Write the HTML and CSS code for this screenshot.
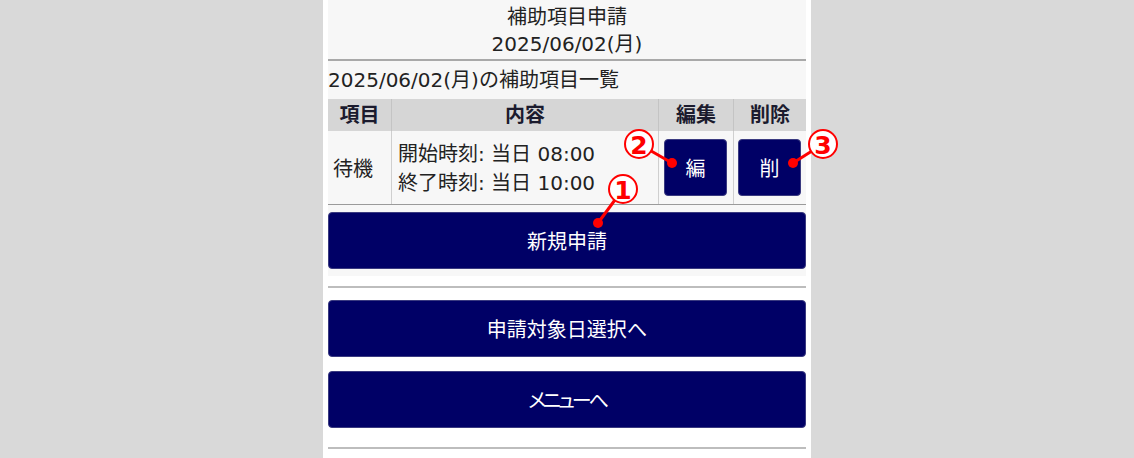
FILE: index.html
```html
<!DOCTYPE html>
<html lang="ja">
<head>
<meta charset="utf-8">
<title>補助項目申請</title>
<link rel="stylesheet" href="styles.css">
</head>
<body>
<div class="page">
  <div class="inner">
    <section class="top">
      <header class="head">
        <div>補助項目申請</div>
        <div>2025/06/02(月)</div>
      </header>
      <div class="subtitle">2025/06/02(月)の補助項目一覧</div>
      <table class="list">
        <thead>
          <tr>
            <th class="c-item">項目</th>
            <th class="c-body">内容</th>
            <th class="c-edit">編集</th>
            <th class="c-del">削除</th>
          </tr>
        </thead>
        <tbody>
          <tr>
            <td class="c-item">待機</td>
            <td class="c-body">開始時刻: 当日 08:00<br>終了時刻: 当日 10:00</td>
            <td class="c-edit"><button class="btn btn-sm">編</button></td>
            <td class="c-del"><button class="btn btn-sm">削</button></td>
          </tr>
        </tbody>
      </table>
      <button class="btn btn-wide btn-new">新規申請</button>
    </section>
    <hr class="rule rule-1">
    <button class="btn btn-wide btn-nav1">申請対象日選択へ</button>
    <button class="btn btn-wide btn-nav2">メニューへ</button>
    <hr class="rule rule-2">
  </div>
  <svg class="callouts" width="520" height="458" viewBox="0 0 520 458">
    <g class="lead">
      <line x1="300" y1="189" x2="275" y2="223"/>
      <line x1="316" y1="144" x2="349" y2="163"/>
      <line x1="500" y1="144" x2="470" y2="163"/>
    </g>
    <g class="dot">
      <circle cx="275" cy="223" r="5"/>
      <circle cx="349" cy="163" r="5"/>
      <circle cx="470" cy="163" r="5"/>
    </g>
    <g class="ring">
      <circle cx="300" cy="189" r="14"/>
      <circle cx="316" cy="144" r="14"/>
      <circle cx="500" cy="144" r="14"/>
    </g>
    <g class="num">
      <text x="300" y="190">1</text>
      <text x="316" y="145">2</text>
      <text x="500" y="145">3</text>
    </g>
  </svg>
</div>
</body>
</html>
```

FILE: styles.css
```css
html, body {
  margin: 0;
  padding: 0;
}

body {
  background: #d9d9d9;
  font-family: "DejaVu Sans", "Noto Sans CJK JP", sans-serif;
  color: #222;
  font-size: 20px;
}

.page {
  position: relative;
  width: 488px;
  min-height: 458px;
  margin: 0 auto;
  background: #fff;
}

.inner {
  padding: 0 5px;
  display: flex;
  flex-direction: column;
}

.top {
  background: #f7f7f7;
  padding-bottom: 7px;
  display: flex;
  flex-direction: column;
}

.head {
  text-align: center;
  line-height: 27px;
  padding: 4px 0 1px;
  border-bottom: 2px solid #a9a9a9;
}

.subtitle {
  line-height: 28px;
  padding: 5px 0 5px 0;
}

.list {
  width: 100%;
  border-collapse: collapse;
  table-layout: fixed;
}

.list th {
  background: #d6d6d6;
  font-weight: bold;
  height: 32px;
  padding: 0;
  line-height: 32px;
  text-align: center;
  border-left: 1px solid #c4c4c4;
  color: #1b1b2e;
}

.list th:first-child,
.list td:first-child {
  border-left: none;
}

.list td {
  background: #f7f7f7;
  height: 70px;
  padding: 0;
  vertical-align: middle;
  border-left: 1px solid #cfcfcf;
  border-bottom: 1px solid #9a9a9a;
  line-height: 29px;
}

.c-item { width: 63px; }
.c-edit { width: 74px; }
.c-del { width: 72px; }

td.c-item { padding: 3px 0 0 5px; }
td.c-body { padding: 3px 0 0 6px; white-space: nowrap; }
td.c-edit { padding-left: 5px; }
td.c-del { padding-left: 4px; }

.btn {
  font-family: "DejaVu Sans", "Noto Sans CJK JP", sans-serif;
  font-size: 20px;
  font-feature-settings: "palt";
  color: #fff;
  background: #000066;
  border: 1px solid #3a3a80;
  border-radius: 4px;
  padding: 0;
  display: block;
}

.btn-sm {
  width: 63px;
  height: 57px;
}

.btn-wide {
  width: 100%;
  height: 57px;
}

.btn-new { margin-top: 7px; }

.rule {
  border: none;
  height: 2px;
  background: #bdbdbd;
  margin: 0;
}

.rule-1 { margin-top: 10px; }
.btn-nav1 { margin-top: 12px; }
.btn-nav2 {
  margin-top: 14px;
  letter-spacing: -3px;
}
.rule-2 { margin-top: 19px; }

.callouts {
  position: absolute;
  top: 0;
  left: 0;
  overflow: visible;
  pointer-events: none;
}

.lead line {
  stroke: #ff0000;
  stroke-width: 3;
}

.dot circle {
  fill: #ff0000;
}

.ring circle {
  fill: #fff;
  stroke: #ff0000;
  stroke-width: 2;
}

.num text {
  fill: #ff0000;
  font-family: "DejaVu Sans", sans-serif;
  font-weight: bold;
  font-size: 25px;
  text-anchor: middle;
  dominant-baseline: central;
}
```
